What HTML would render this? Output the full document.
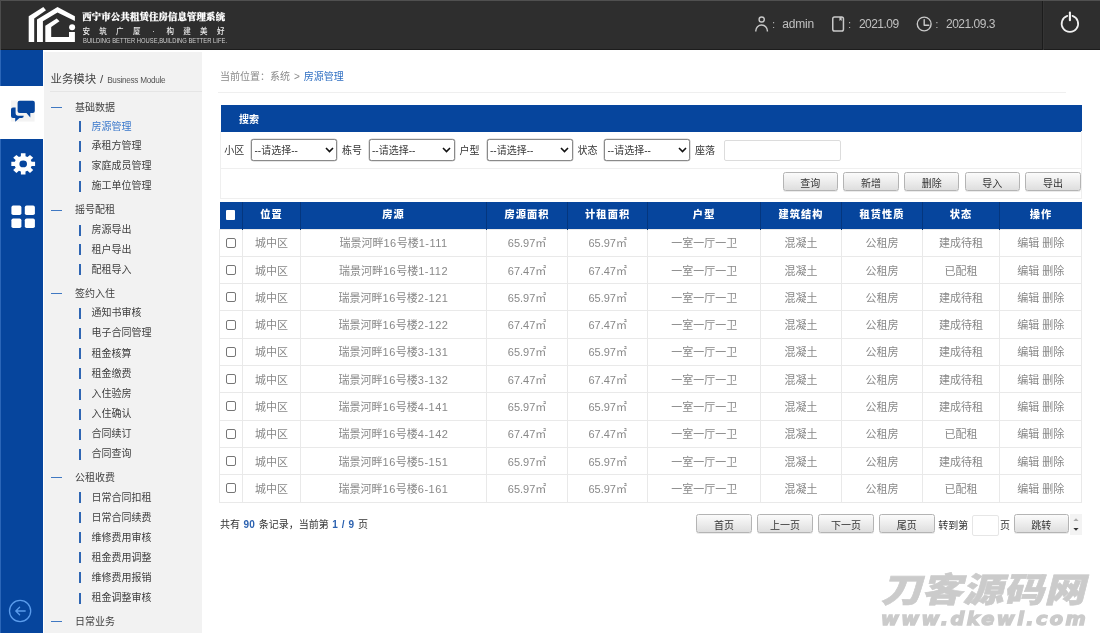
<!DOCTYPE html>
<html lang="zh-CN">
<head>
<meta charset="utf-8">
<title>西宁市公共租赁住房信息管理系统</title>
<style>
*{box-sizing:border-box;margin:0;padding:0}
html,body{width:1100px;height:633px;overflow:hidden;background:#fff}
body{position:relative;font-family:"Liberation Sans","Noto Sans CJK SC",sans-serif;font-size:10px;line-height:16px;color:#444}
.abs{position:absolute}
#wrap{position:absolute;left:0;top:0;width:1100px;height:633px;will-change:transform}
/* header */
#hd{position:absolute;left:0;top:0;width:1100px;height:50px;background:#2e2e2e;border-top:1px solid #505050;border-bottom:1px solid #1c1c1c}
#hd .t1{position:absolute;left:82.3px;top:8.4px;height:16px;line-height:16px;font-family:"Liberation Serif","Noto Serif CJK SC",serif;font-weight:900;font-size:9.4px;letter-spacing:0.15px;-webkit-text-stroke:0.25px #fff;color:#fff;white-space:nowrap}
#hd .t2{position:absolute;left:82.5px;top:23px;height:16px;line-height:16px;font-size:7.5px;font-weight:500;letter-spacing:9.3px;color:#ececec;white-space:nowrap}
#hd .t2 span{display:inline-block;width:16.8px;text-align:center;letter-spacing:0;text-indent:-9.3px}
#hd .t3{position:absolute;left:82.5px;top:33.6px;height:12px;line-height:12px;font-size:6.3px;color:#cfcfcf;white-space:nowrap;transform-origin:0 50%;transform:scaleX(0.927)}
#hd .tx{position:absolute;top:13.5px;height:18px;line-height:18px;font-size:12px;color:#c0c0c0;white-space:nowrap}
#hd .cl{position:absolute;top:14.5px;height:18px;line-height:18px;font-size:10px;color:#c0c0c0}
#hd .sep{position:absolute;left:1042px;top:0;width:1px;height:49px;background:#1c1c1c;box-shadow:1px 0 0 #343434}
/* left bar */
#lb{position:absolute;left:0;top:50px;width:43px;height:583px;background:#06459d}
#lb .on{position:absolute;left:0;top:36px;width:43px;height:53px;background:#fff}
/* sidebar */
#sb{position:absolute;left:44px;top:52px;width:158px;height:581px;background:#f2f2f2}
#sb .h{position:absolute;left:6.5px;top:18px;height:18px;line-height:18px;font-size:11.4px;color:#444;white-space:nowrap}
#sb .h em{font-style:normal;font-size:8.2px;letter-spacing:-0.28px;color:#555;margin-left:0.8px}
#sb .ln{position:absolute;left:6px;top:38.6px;width:152px;height:1px;background:#e5e5e5}
.grp,.itm{position:absolute;left:44px;width:158px;height:16px;line-height:16px;font-size:10px;white-space:nowrap;color:#404040}
.grp i{position:absolute;left:7px;top:7.4px;width:11px;height:1px;background:#3f78c2}
.grp span{position:absolute;left:31px;top:0}
.itm i{position:absolute;left:35px;top:2.5px;width:2px;height:11px;background:#2f66b3}
.itm span{position:absolute;left:47.5px;top:0}
.itm.act span{color:#3a78cb}
/* main */
#bc{position:absolute;left:220px;top:69px;word-spacing:1.2px;height:16px;line-height:16px;font-size:10px;color:#8a8a8a;white-space:nowrap}
#bc b{font-weight:normal;color:#2f6fc2}
.hl{position:absolute;height:1px;background:#efefef}
#sh{position:absolute;left:220.5px;top:105px;width:861px;height:26.7px;background:#06459d;color:#fff;font-weight:bold;font-size:10px;line-height:26px;padding-left:18.5px;padding-top:2px}
.lab{position:absolute;top:142.6px;height:16px;line-height:16px;font-size:10px;color:#333;white-space:nowrap}
.sel{position:absolute;top:139px;height:22px;width:86px;border:1px solid #8a8a8a;border-radius:2.5px;background:#fff;font-size:10px;line-height:21px;color:#3a3a3a;padding-left:2.5px;box-shadow:0 0 0 0.3px #9a9a9a;white-space:nowrap}
.sel svg{position:absolute;right:2.2px;top:6.8px}
.inp{position:absolute;border:1px solid #dcdcdc;border-radius:2px;background:#fff}
.btn{position:absolute;height:18.5px;width:55.5px;border:1px solid #b4b4b4;border-radius:2.5px;background:linear-gradient(#fbfbfb,#ededed 50%,#dedede);box-shadow:0 1px 0 rgba(0,0,0,.08);font-size:10px;line-height:17.5px;padding-top:1.6px;color:#333;text-align:center;white-space:nowrap}
/* table */
#tb{position:absolute;left:219.4px;top:201.6px;width:862px;border-collapse:collapse;table-layout:fixed;font-size:11px}
#tb th{height:27.5px;background:#06459d;color:#fff;font-family:"Liberation Sans","Noto Sans CJK SC",sans-serif;font-weight:900;font-size:10.2px;letter-spacing:1.1px;border-left:1px solid #04367e;padding:0.6px 0 0 0;text-align:center;line-height:16px}
#tb th:first-child{border-left:none}
#tb td{height:27.3px;color:#888;text-align:center;border:1px solid #e9e9e9;padding:1px 0 0 0;line-height:16px;white-space:nowrap;font-size:11px}
.cb{margin-left:-1px;display:inline-block;width:10px;height:10px;border:1px solid #767676;border-radius:2px;background:#fff;vertical-align:middle;position:relative;top:-1.7px}
.cbh{display:inline-block;width:9.5px;height:9.5px;background:#fff;border-radius:1px;vertical-align:middle;position:relative;top:-0.8px;left:-0.5px}
#tb .n{letter-spacing:0.5px}
#ft{position:absolute;left:220px;top:517px;word-spacing:0.8px;height:16px;line-height:16px;font-size:10px;color:#333;white-space:nowrap}
#ft b{color:#2c62b0;letter-spacing:0.2px}
#wm1{position:absolute;left:883.5px;top:566px;height:48px;line-height:48px;font-family:"Liberation Sans","Noto Sans CJK SC",sans-serif;font-weight:900;font-size:34px;color:#cbcbcb;-webkit-text-stroke:0.6px #cbcbcb;white-space:nowrap;transform-origin:0 50%;transform:skewX(-14deg) scaleX(1.2)}
#wm2{position:absolute;left:881px;top:607px;height:24px;line-height:24px;font-family:"DejaVu Sans","Liberation Sans",sans-serif;font-weight:bold;font-style:italic;font-size:17.5px;letter-spacing:2.2px;color:#cbcbcb;-webkit-text-stroke:1.3px #cbcbcb;white-space:nowrap;transform-origin:0 50%;transform:scaleX(1.105)}
</style>
</head>
<body>
<div id="wrap">
<div id="hd">
<svg class="abs" style="left:20px;top:-1px" width="80" height="50" viewBox="20 0 80 50"><g fill="#fff">
<polygon points="28.7,41.9 28.7,16.2 43.3,7.1 46,10.3 34.2,18.6 34.2,41.9"/>
<polygon points="37,41.9 37,19.4 57.5,7 74.9,16.2 74.9,20.9 57.5,12.6 42.9,21.3 42.9,41.9"/>
<polygon points="45.3,41.9 45.3,25.7 56.7,18.6 59.5,21.3 51.2,26.9 51.2,37.1 69,37.1 69,32 74.9,32 74.9,41.9"/>
<circle cx="72.1" cy="27.3" r="3"/></g></svg>
<div class="t1">西宁市公共租赁住房信息管理系统</div>
<div class="t2">安筑广厦<span>·</span>构建美好</div>
<div class="t3">BUILDING BETTER HOUSE,BUILDING BETTER LIFE.</div>
<svg class="abs" style="left:752px;top:13px" width="20" height="22" viewBox="752 14 20 22" fill="none" stroke="#c9c9c9" stroke-width="1.4"><ellipse cx="761.7" cy="19.5" rx="2.6" ry="2.55"/><path d="M755.8 31.4v-0.6a5.8 5.8 0 0 1 11.6 0v0.6"/></svg>
<div class="cl" style="left:772.2px">:</div>
<div class="tx" style="left:782.3px;letter-spacing:-0.18px">admin</div>
<svg class="abs" style="left:830px;top:13px" width="18" height="22" viewBox="830 14 18 22" fill="none" stroke="#c9c9c9" stroke-width="1.5"><rect x="832.75" y="16.95" width="10.7" height="14.1" rx="1.8"/><path d="M839.4 17v4l1.15-1 1.15 1v-4z" fill="#c9c9c9" stroke="none"/></svg>
<div class="cl" style="left:848.2px">:</div>
<div class="tx" style="left:859px;letter-spacing:-0.55px">2021.09</div>
<svg class="abs" style="left:914px;top:13px" width="20" height="22" viewBox="914 14 20 22" fill="none" stroke="#c9c9c9" stroke-width="1.4" stroke-linecap="round" stroke-linejoin="round"><circle cx="924.2" cy="24" r="6.9"/><path d="M924.2 19.8v5.4h4.6"/></svg>
<div class="cl" style="left:935.6px">:</div>
<div class="tx" style="left:946px;letter-spacing:-0.5px">2021.09.3</div>
<div class="sep"></div>
<svg class="abs" style="left:1055px;top:8px" width="30" height="30" viewBox="1055 9 30 30" fill="none" stroke="#f0f0f0" stroke-linecap="round"><path stroke-width="1.75" d="M1067.3 15.87a8.25 8.25 0 1 0 5.2 0"/><path stroke-width="2.1" stroke="#f6f6f6" d="M1069.9 12.5v7.8"/></svg>
</div>

<div class="abs" style="left:0;top:0;width:1px;height:50px;background:#4c4c4c"></div>
<div id="lb">
<div class="abs" style="left:0;top:0;width:1px;height:583px;background:#2b66b8"></div>
<div class="on"></div>
<svg class="abs" style="left:10px;top:49px" width="26" height="24" viewBox="10 99 26 24"><rect x="11" y="100.4" width="23.6" height="21.2" fill="#f3f3f3"/><g fill="#06459d"><path d="M19.6 100.7h13.2a2 2 0 0 1 2 2v8.4a2 2 0 0 1-2 2h-2.5v4.4l-3.8-4.4h-6.9a2 2 0 0 1-2-2v-8.4a2 2 0 0 1 2-2z"/><path d="M13 107.4h2.6v5.7a2.6 2.6 0 0 0 2.6 2.6h5.5v0.2a2 2 0 0 1-2 2h-2.2l-4.3 3.8v-3.8h-2.2a2 2 0 0 1-2-2v-6.5a2 2 0 0 1 2-2z"/></g></svg>
<svg class="abs" style="left:9px;top:100px" width="28" height="28" viewBox="-14 -14 28 28"><g fill="#fff" transform="translate(0.2,-0.1) scale(1,0.9)"><path fill-rule="evenodd" d="M-2.32 -8.38 L-2.29 -11.88 L2.29 -11.88 L2.32 -8.38 L4.29 -7.57 L6.79 -10.02 L10.02 -6.79 L7.57 -4.29 L8.38 -2.32 L11.88 -2.29 L11.88 2.29 L8.38 2.32 L7.57 4.29 L10.02 6.79 L6.79 10.02 L4.29 7.57 L2.32 8.38 L2.29 11.88 L-2.29 11.88 L-2.32 8.38 L-4.29 7.57 L-6.79 10.02 L-10.02 6.79 L-7.57 4.29 L-8.38 2.32 L-11.88 2.29 L-11.88 -2.29 L-8.38 -2.32 L-7.57 -4.29 L-10.02 -6.79 L-6.79 -10.02 L-4.29 -7.57Z M3.80 0 A3.80 3.80 0 1 0 -3.80 0 A3.80 3.80 0 1 0 3.80 0Z"/></g></svg>
<svg class="abs" style="left:10px;top:154px" width="26" height="26" viewBox="10 204 26 26"><g fill="#fff"><rect x="11.4" y="205.6" width="10" height="9.4" rx="1.8"/><rect x="24.8" y="205.6" width="10.1" height="9.4" rx="1.8"/><rect x="11.4" y="218.5" width="10" height="9.5" rx="1.8"/><rect x="24.8" y="218.5" width="10.1" height="9.5" rx="1.8"/></g></svg>
<svg class="abs" style="left:7px;top:548px" width="26" height="26" viewBox="7 598 26 26" fill="none" stroke="#5b9cec" stroke-width="1.3" stroke-linecap="round" stroke-linejoin="round"><circle cx="20.1" cy="611" r="10.6"/><path d="M25.2 611h-9.2M19.6 607.2l-3.8 3.8 3.8 3.8"/></svg>
</div>

<div id="sb">
<div class="h">业务模块 <i style="font-style:normal;margin-left:0.8px">/</i> <em>Business Module</em></div>
<div class="ln"></div>
</div>
<div class="grp" style="top:99.8px"><i style="top:7.2px"></i><span>基础数据</span></div>
<div class="itm act" style="top:118.7px"><i></i><span>房源管理</span></div>
<div class="itm" style="top:138.4px"><i></i><span>承租方管理</span></div>
<div class="itm" style="top:158.3px"><i></i><span>家庭成员管理</span></div>
<div class="itm" style="top:178.0px"><i></i><span>施工单位管理</span></div>
<div class="grp" style="top:202.4px"><i style="top:7.6px"></i><span>摇号配租</span></div>
<div class="itm" style="top:222.0px"><i></i><span>房源导出</span></div>
<div class="itm" style="top:241.9px"><i></i><span>租户导出</span></div>
<div class="itm" style="top:261.9px"><i></i><span>配租导入</span></div>
<div class="grp" style="top:285.7px"><i style="top:7.3px"></i><span>签约入住</span></div>
<div class="itm" style="top:305.2px"><i></i><span>通知书审核</span></div>
<div class="itm" style="top:325.4px"><i></i><span>电子合同管理</span></div>
<div class="itm" style="top:345.7px"><i></i><span>租金核算</span></div>
<div class="itm" style="top:365.9px"><i></i><span>租金缴费</span></div>
<div class="itm" style="top:386.1px"><i></i><span>入住验房</span></div>
<div class="itm" style="top:406.0px"><i></i><span>入住确认</span></div>
<div class="itm" style="top:426.2px"><i></i><span>合同续订</span></div>
<div class="itm" style="top:446.4px"><i></i><span>合同查询</span></div>
<div class="grp" style="top:470.0px"><i style="top:7.0px"></i><span>公租收费</span></div>
<div class="itm" style="top:489.7px"><i></i><span>日常合同扣租</span></div>
<div class="itm" style="top:509.7px"><i></i><span>日常合同续费</span></div>
<div class="itm" style="top:529.8px"><i></i><span>维修费用审核</span></div>
<div class="itm" style="top:549.8px"><i></i><span>租金费用调整</span></div>
<div class="itm" style="top:569.9px"><i></i><span>维修费用报销</span></div>
<div class="itm" style="top:590.0px"><i></i><span>租金调整审核</span></div>
<div class="grp" style="top:614.0px"><i style="top:7.0px"></i><span>日常业务</span></div>

<div id="bc">当前位置：系统 &gt; <b>房源管理</b></div>
<div class="hl" style="left:218px;top:92px;width:848px"></div>
<div id="sh">搜索</div>
<div class="hl" style="left:220px;top:167.5px;width:862px"></div>
<div class="hl" style="left:220px;top:197.5px;width:862px"></div>
<div class="hl" style="left:220px;top:131px;width:1px;height:67px"></div>
<div class="hl" style="left:1081px;top:131px;width:1px;height:67px"></div>

<div class="lab" style="left:224.3px">小区</div>
<div class="sel" style="left:251px">--请选择--<svg width="9" height="6" viewBox="0 0 9 6"><path d="M1 1l3.5 3.5L8 1" fill="none" stroke="#111" stroke-width="1.6"/></svg></div>
<div class="lab" style="left:342px">栋号</div>
<div class="sel" style="left:368.5px">--请选择--<svg width="9" height="6" viewBox="0 0 9 6"><path d="M1 1l3.5 3.5L8 1" fill="none" stroke="#111" stroke-width="1.6"/></svg></div>
<div class="lab" style="left:459.5px">户型</div>
<div class="sel" style="left:486.5px">--请选择--<svg width="9" height="6" viewBox="0 0 9 6"><path d="M1 1l3.5 3.5L8 1" fill="none" stroke="#111" stroke-width="1.6"/></svg></div>
<div class="lab" style="left:577.5px">状态</div>
<div class="sel" style="left:604px">--请选择--<svg width="9" height="6" viewBox="0 0 9 6"><path d="M1 1l3.5 3.5L8 1" fill="none" stroke="#111" stroke-width="1.6"/></svg></div>
<div class="lab" style="left:695px">座落</div>
<div class="inp" style="left:724px;top:139.5px;width:116.5px;height:21.5px"></div>

<div class="btn" style="left:782.5px;top:172.3px">查询</div>
<div class="btn" style="left:843.2px;top:172.3px">新增</div>
<div class="btn" style="left:903.9px;top:172.3px">删除</div>
<div class="btn" style="left:964.6px;top:172.3px">导入</div>
<div class="btn" style="left:1025.3px;top:172.3px">导出</div>

<table id="tb">
<colgroup><col style="width:22.7px"><col style="width:57.8px"><col style="width:186.3px"><col style="width:80.8px"><col style="width:80.4px"><col style="width:112.6px"><col style="width:81px"><col style="width:81.2px"><col style="width:76.9px"><col style="width:82.3px"></colgroup>
<tr><th><b class="cbh"></b></th><th>位置</th><th>房源</th><th>房源面积</th><th>计租面积</th><th>户型</th><th>建筑结构</th><th>租赁性质</th><th>状态</th><th>操作</th></tr>
<tr><td><b class="cb"></b></td><td>城中区</td><td>瑞景河畔<span class="n">16</span>号楼<span class="n">1-111</span></td><td>65.97㎡</td><td>65.97㎡</td><td>一室一厅一卫</td><td>混凝土</td><td>公租房</td><td>建成待租</td><td>编辑 删除</td></tr>
<tr><td><b class="cb"></b></td><td>城中区</td><td>瑞景河畔<span class="n">16</span>号楼<span class="n">1-112</span></td><td>67.47㎡</td><td>67.47㎡</td><td>一室一厅一卫</td><td>混凝土</td><td>公租房</td><td>已配租</td><td>编辑 删除</td></tr>
<tr><td><b class="cb"></b></td><td>城中区</td><td>瑞景河畔<span class="n">16</span>号楼<span class="n">2-121</span></td><td>65.97㎡</td><td>65.97㎡</td><td>一室一厅一卫</td><td>混凝土</td><td>公租房</td><td>建成待租</td><td>编辑 删除</td></tr>
<tr><td><b class="cb"></b></td><td>城中区</td><td>瑞景河畔<span class="n">16</span>号楼<span class="n">2-122</span></td><td>67.47㎡</td><td>67.47㎡</td><td>一室一厅一卫</td><td>混凝土</td><td>公租房</td><td>建成待租</td><td>编辑 删除</td></tr>
<tr><td><b class="cb"></b></td><td>城中区</td><td>瑞景河畔<span class="n">16</span>号楼<span class="n">3-131</span></td><td>65.97㎡</td><td>65.97㎡</td><td>一室一厅一卫</td><td>混凝土</td><td>公租房</td><td>建成待租</td><td>编辑 删除</td></tr>
<tr><td><b class="cb"></b></td><td>城中区</td><td>瑞景河畔<span class="n">16</span>号楼<span class="n">3-132</span></td><td>67.47㎡</td><td>67.47㎡</td><td>一室一厅一卫</td><td>混凝土</td><td>公租房</td><td>建成待租</td><td>编辑 删除</td></tr>
<tr><td><b class="cb"></b></td><td>城中区</td><td>瑞景河畔<span class="n">16</span>号楼<span class="n">4-141</span></td><td>65.97㎡</td><td>65.97㎡</td><td>一室一厅一卫</td><td>混凝土</td><td>公租房</td><td>建成待租</td><td>编辑 删除</td></tr>
<tr><td><b class="cb"></b></td><td>城中区</td><td>瑞景河畔<span class="n">16</span>号楼<span class="n">4-142</span></td><td>67.47㎡</td><td>67.47㎡</td><td>一室一厅一卫</td><td>混凝土</td><td>公租房</td><td>已配租</td><td>编辑 删除</td></tr>
<tr><td><b class="cb"></b></td><td>城中区</td><td>瑞景河畔<span class="n">16</span>号楼<span class="n">5-151</span></td><td>65.97㎡</td><td>65.97㎡</td><td>一室一厅一卫</td><td>混凝土</td><td>公租房</td><td>建成待租</td><td>编辑 删除</td></tr>
<tr><td><b class="cb"></b></td><td>城中区</td><td>瑞景河畔<span class="n">16</span>号楼<span class="n">6-161</span></td><td>65.97㎡</td><td>65.97㎡</td><td>一室一厅一卫</td><td>混凝土</td><td>公租房</td><td>已配租</td><td>编辑 删除</td></tr>
</table>

<div id="ft">共有 <b>90</b> 条记录，当前第 <b>1 / 9</b> 页</div>
<div class="btn" style="left:696px;top:514.3px;width:56px">首页</div>
<div class="btn" style="left:757px;top:514.3px;width:56px">上一页</div>
<div class="btn" style="left:818px;top:514.3px;width:56px">下一页</div>
<div class="btn" style="left:879px;top:514.3px;width:55.5px">尾页</div>
<div class="lab" style="left:938.3px;top:518px">转到第</div>
<div class="inp" style="left:972px;top:514.5px;width:26.5px;height:21px;border-color:#e6e6e6"></div>
<div class="lab" style="left:1000px;top:518px">页</div>
<div class="btn" style="left:1013.6px;top:514.3px;width:55.5px">跳转</div>
<div class="abs" style="left:1070.2px;top:514px;width:11.8px;height:21.2px;background:#f3f3f3"></div>
<svg class="abs" style="left:1072px;top:516px" width="8" height="17" viewBox="0 0 8 17"><path d="M1.4 5l2.6-2.8L6.6 5z" fill="#a9a9a9"/><path d="M1.4 12l2.6 2.8L6.6 12z" fill="#333"/></svg>

<div id="wm1">刀客源码网</div>
<div id="wm2">www.dkewl.com</div>
</div>
</body>
</html>
